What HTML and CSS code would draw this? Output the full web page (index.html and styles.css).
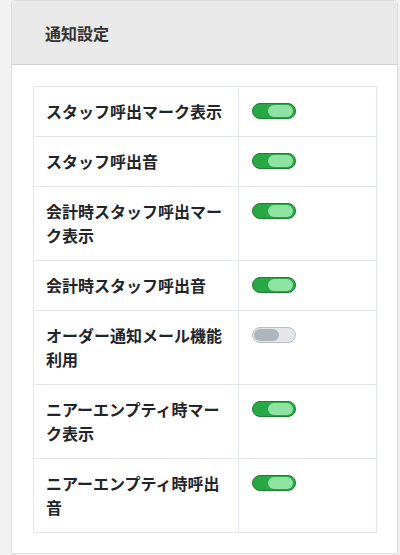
FILE: index.html
```html
<!DOCTYPE html>
<html lang="ja">
<head>
  <meta charset="UTF-8" />
  <title>通知設定</title>
  <link rel="stylesheet" href="styles.css">
</head>
<body>
  <div class="panel">
    <div class="panel-header">通知設定</div>
    <div class="panel-body">
      <table class="settings">
        <tr>
          <th>スタッフ呼出マーク表示</th>
          <td><span class="toggle on"></span></td>
        </tr>
        <tr>
          <th>スタッフ呼出音</th>
          <td><span class="toggle on"></span></td>
        </tr>
        <tr>
          <th>会計時スタッフ呼出マーク表示</th>
          <td><span class="toggle on"></span></td>
        </tr>
        <tr>
          <th>会計時スタッフ呼出音</th>
          <td><span class="toggle on"></span></td>
        </tr>
        <tr>
          <th>オーダー通知メール機能利用</th>
          <td><span class="toggle"></span></td>
        </tr>
        <tr>
          <th>ニアーエンプティ時マーク表示</th>
          <td><span class="toggle on"></span></td>
        </tr>
        <tr>
          <th>ニアーエンプティ時呼出音</th>
          <td><span class="toggle on"></span></td>
        </tr>
      </table>
    </div>
  </div>
</body>
</html>
```

FILE: styles.css
```css
/* 通知設定パネル */
body {
  margin: 0;
  background: #f2f2f2;
  font-family: "Noto Sans CJK JP", "Noto Sans", sans-serif;
  color: #212529;
}

.panel {
  margin-left: 11px;
  width: 385px;
  height: 552px;
  background: #fff;
  border: 1px solid #dcdcdc;
  border-radius: 4px 4px 0 0;
  box-sizing: content-box;
}

.panel-header {
  height: 63px;
  display: flex;
  align-items: center;
  padding-left: 33px;
  background: #e9e9e9;
  border-bottom: 1px solid #d2d2d2;
  border-radius: 4px 4px 0 0;
  font-size: 16px;
  font-weight: bold;
  color: #333;
}

.panel-body {
  padding: 21px 20px 20px 21px;
}

.settings {
  width: 344px;
  border-collapse: collapse;
}

.settings th,
.settings td {
  border: 1px solid #e3e7ec;
  vertical-align: top;
}

.settings th {
  width: 180px;
  padding: 12px 12px 13px 12px;
  text-align: left;
  font-size: 16px;
  line-height: 24px;
  font-weight: bold;
}

.settings td {
  padding: 16px 13px;
}

.toggle {
  display: block;
  position: relative;
  width: 42px;
  height: 14px;
  border: 1px solid #b9bec4;
  border-radius: 9px;
  background: #e4e7ea;
}

.toggle::after {
  content: "";
  position: absolute;
  top: 1px;
  left: 1px;
  width: 25px;
  height: 12px;
  border-radius: 6px;
  background: #adb5bd;
}

.toggle.on {
  border-color: #1e7e34;
  background: #28a745;
}

.toggle.on::after {
  left: auto;
  right: 2px;
  background: #8ee2a2;
}
```
